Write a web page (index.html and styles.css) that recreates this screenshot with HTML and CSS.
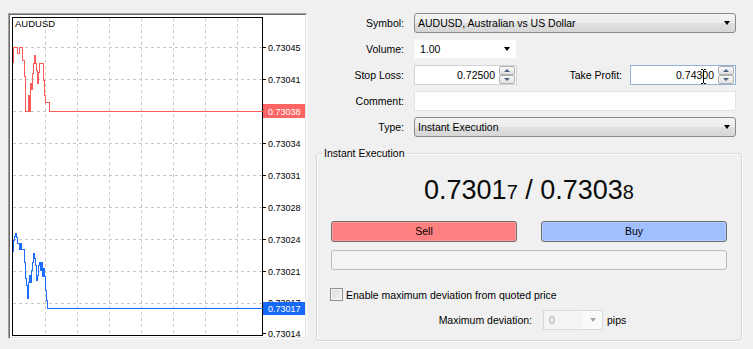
FILE: index.html
```html
<!DOCTYPE html>
<html>
<head>
<meta charset="utf-8">
<title>Order</title>
<link rel="stylesheet" href="styles.css">
</head>
<body>
<div class="window">
  <div class="chart-panel">
    <svg class="chart" width="297" height="324" viewBox="9 14 297 324" shape-rendering="crispEdges">
      <g class="grid" stroke="#c8c8c8" stroke-width="1" stroke-dasharray="3 3" fill="none">
        <path d="M45.5 18V335M77.5 18V335M109.5 18V335M141.5 18V335M173.5 18V335M205.5 18V335M237.5 18V335"/>
        <path d="M13 47.5H262M13 79.5H262M13 111.5H262M13 143.5H262M13 175.5H262M13 207.5H262M13 239.5H262M13 271.5H262M13 303.5H262"/>
      </g>
      <rect x="12.5" y="17.5" width="250" height="318" fill="none" stroke="#000"/>
      <path stroke="#000" d="M263 47.5H266M263 79.5H266M263 143.5H266M263 175.5H266M263 207.5H266M263 239.5H266M263 271.5H266M263 303.5H266M263 333.5H266"/>
      <text class="sym" x="15" y="27">AUDUSD</text>
      <g class="ax">
        <text x="268" y="50.5">0.73045</text>
        <text x="268" y="82.5">0.73041</text>
        <text x="268" y="146.5">0.73034</text>
        <text x="268" y="178.5">0.73031</text>
        <text x="268" y="210.5">0.73028</text>
        <text x="268" y="242.5">0.73024</text>
        <text x="268" y="274.5">0.73021</text>
        <text x="268" y="305.5">0.73017</text>
        <text x="268" y="336.5">0.73014</text>
      </g>
      <path fill="none" stroke="#ff5a5a" stroke-width="1" d="M13.5 63V47.5H17V53H19V47.5H22V60H24V76H25V111H28V95H29.5V111H30V83H31V89H32V73H33V63H34V55H35V63H36V70H37V83H38V72H39V63H43V80H44V95H45V102H49V111.5H263"/>
      <path fill="none" stroke="#1b6cff" stroke-width="1" d="M13.5 252V240H14.5V236H15.5V233H16.5V237H17.5V243H19V249H20V243H21V249H24V262H25V278H26V285H27V298H28V282H29V275H30V282H31V270H32V262H33V253H34V258H35V265H36V280H37V275H38V265H39V262H40V270H41V262H42V276H43V268H44V276H45V290H46V300H47V308.5H263"/>
      <rect x="263" y="104" width="42" height="14" fill="#ff6464"/>
      <text class="ax tag" x="268" y="114.5">0.73038</text>
      <rect x="263" y="302" width="42" height="13" fill="#1668f5"/>
      <text class="ax tag" x="268" y="312">0.73017</text>
    </svg>
  </div>

  <div class="order">
    <div class="form">
      <div class="lbl">Symbol:</div>
      <div class="select"><span>AUDUSD, Australian vs US Dollar</span><i class="arrow"></i></div>

      <div class="lbl">Volume:</div>
      <div class="ctl"><div class="combo"><span>1.00</span><i class="arrow"></i></div></div>

      <div class="lbl">Stop Loss:</div>
      <div class="ctl sl">
        <div class="spin"><span class="val">0.72500</span><div class="spinbtns"><b class="up"></b><b class="down"></b></div></div>
        <div class="lbl tp">Take Profit:</div>
        <div class="spin focus wide"><span class="val">0.74300</span><div class="spinbtns"><b class="up"></b><b class="down"></b></div>
          <svg class="ibeam" width="7" height="15" viewBox="0 0 7 15"><path d="M1 0.5H3M4 0.5H6M3.5 1V14M1 14.5H3M4 14.5H6" stroke="#000" fill="none"/></svg>
        </div>
      </div>

      <div class="lbl">Comment:</div>
      <div class="text"></div>

      <div class="lbl">Type:</div>
      <div class="select"><span>Instant Execution</span><i class="arrow"></i></div>
    </div>

    <fieldset class="group">
      <legend>Instant Execution</legend>
      <div class="group-body">
        <div class="price">0.7301<small>7</small> / 0.7303<small>8</small></div>
        <div class="buttons">
          <div class="btn sell">Sell</div>
          <div class="btn buy">Buy</div>
        </div>
        <div class="progress"></div>
        <div class="check-row"><span class="checkbox"></span><span>Enable maximum deviation from quoted price</span></div>
        <div class="dev-row">
          <span class="dev-lbl">Maximum deviation:</span>
          <div class="dcombo"><span>0</span><i class="arrow"></i></div>
          <span>pips</span>
        </div>
      </div>
    </fieldset>
  </div>
</div>
</body>
</html>
```
FILE: styles.css
```css
* { box-sizing: border-box; }
html, body { margin: 0; }
body {
  background: #f0f0f0;
  font-family: "Liberation Sans", Arial, sans-serif;
  font-size: 10.5px;
  color: #000;
  width: 753px;
  height: 349px;
  overflow: hidden;
}
.window {
  display: flex;
  gap: 9px;
  padding: 13px 11px 0 8px;
}
.chart-panel {
  width: 299px;
  height: 326px;
  flex: none;
  background: #fff;
  border: 1px solid;
  border-color: #a0a0a0 #ffffff #ffffff #a0a0a0;
  box-shadow: inset 1px 1px #696969, inset -1px -1px #e3e3e3;
}
.chart { display: block; }
.chart text { font-family: "Liberation Sans", Arial, sans-serif; font-size: 9px; fill: #000; }
.chart .sym { font-size: 9.5px; }
.chart .tag { fill: #fff; }

.order { width: 426px; flex: none; }
.form {
  display: grid;
  grid-template-columns: 88px 322px;
  grid-auto-rows: 20px;
  column-gap: 10px;
  row-gap: 6px;
}
.lbl { text-align: right; line-height: 20px; white-space: nowrap; }
.ctl { display: flex; align-items: center; }
.select {
  display: flex;
  align-items: center;
  justify-content: space-between;
  padding: 0 5px 0 3px;
  border: 1px solid #8a8a8a;
  border-radius: 3px;
  background: linear-gradient(#f4f4f4 0%, #ececec 50%, #e0e0e0 51%, #d6d6d6 100%);
}
.arrow {
  display: block;
  width: 0; height: 0;
  border-left: 3.5px solid transparent;
  border-right: 3.5px solid transparent;
  border-top: 4px solid #000;
}
.combo {
  width: 103px;
  height: 20px;
  display: flex;
  align-items: center;
  justify-content: space-between;
  padding: 0 6px 0 5px;
  background: #fff;
  border: 1px solid #f4f4f4;
}
.sl { gap: 8px; }
.sl .tp { flex: 1; }
.spin {
  position: relative;
  width: 103px;
  height: 20px;
  flex: none;
  display: flex;
  background: #fff;
  border: 1px solid #d0d3d7;
}
.spin.wide { width: 106px; }
.spin.focus { border-color: #8fb3d9; }
.spin .val { flex: 1; text-align: right; padding-right: 4px; line-height: 18px; }
.spinbtns {
  width: 17px;
  display: flex;
  flex-direction: column;
  padding: 0 1px 0 0;
}
.spinbtns b {
  flex: 1;
  display: flex;
  align-items: center;
  justify-content: center;
  border: 1px solid #b0b0b0;
  border-radius: 2px;
  background: linear-gradient(#f8f8f8, #e2e2e2);
}
.spinbtns b::after {
  content: "";
  width: 0; height: 0;
  border-left: 3px solid transparent;
  border-right: 3px solid transparent;
}
.spinbtns .up::after { border-bottom: 3px solid #4d6080; }
.spinbtns .down::after { border-top: 3px solid #4d6080; }
.ibeam { position: absolute; left: 69px; top: 3px; }
.text { background: #fff; border: 1px solid #e2e3e6; }

.group {
  margin: 10px 0 0 0;
  padding: 0;
  border: 1px solid #d5d8dc;
  border-radius: 3px;
  box-shadow: inset 1px 1px #fff, 1px 1px #fff;
}
.group legend {
  margin-left: 5px;
  padding: 0 2px;
  line-height: 13px;
}
.group-body { padding: 0 14px 10px 14px; }
.price {
  padding-top: 14px;
  text-align: center;
  font-size: 27px;
  line-height: 32px;
  color: #0b0b0b;
}
.price small { font-size: 20px; }
.buttons {
  margin-top: 13px;
  display: flex;
  gap: 24px;
}
.btn {
  flex: 1;
  height: 21px;
  line-height: 19px;
  text-align: center;
  border: 1px solid #6f6f6f;
  border-radius: 3px;
}
.sell { background: #ff8080; box-shadow: inset 0 0 0 1px #ff9a9a; }
.buy { background: #a0bfff; box-shadow: inset 0 0 0 1px #b6ceff; }
.progress {
  margin-top: 8px;
  height: 20px;
  border: 1px solid #bcbcbc;
  border-radius: 3px;
  background: #f4f4f4;
}
.check-row {
  margin: 18px 0 0 -1px;
  height: 13px;
  display: flex;
  align-items: center;
  gap: 3px;
}
.checkbox {
  width: 13px;
  height: 13px;
  border: 1px solid #8e8f8f;
  background: linear-gradient(135deg, #dcdcdc, #f4f4f4);
  box-shadow: inset 0 0 0 1px #f4f4f4;
}
.dev-row {
  margin-top: 9px;
  height: 20px;
  display: flex;
  align-items: center;
}
.dev-lbl { width: 201px; text-align: right; margin-right: 11px; }
.dcombo {
  width: 60px;
  height: 20px;
  display: flex;
  align-items: center;
  justify-content: space-between;
  padding: 0 6px 0 5px;
  border: 1px solid #d9d9d9;
  background: linear-gradient(90deg, #f4f4f4 0, #f4f4f4 38px, #fafafa 38px);
  color: #a8a8a8;
  margin-right: 4px;
}
.dcombo .arrow { border-top-color: #a8a8a8; }
```
